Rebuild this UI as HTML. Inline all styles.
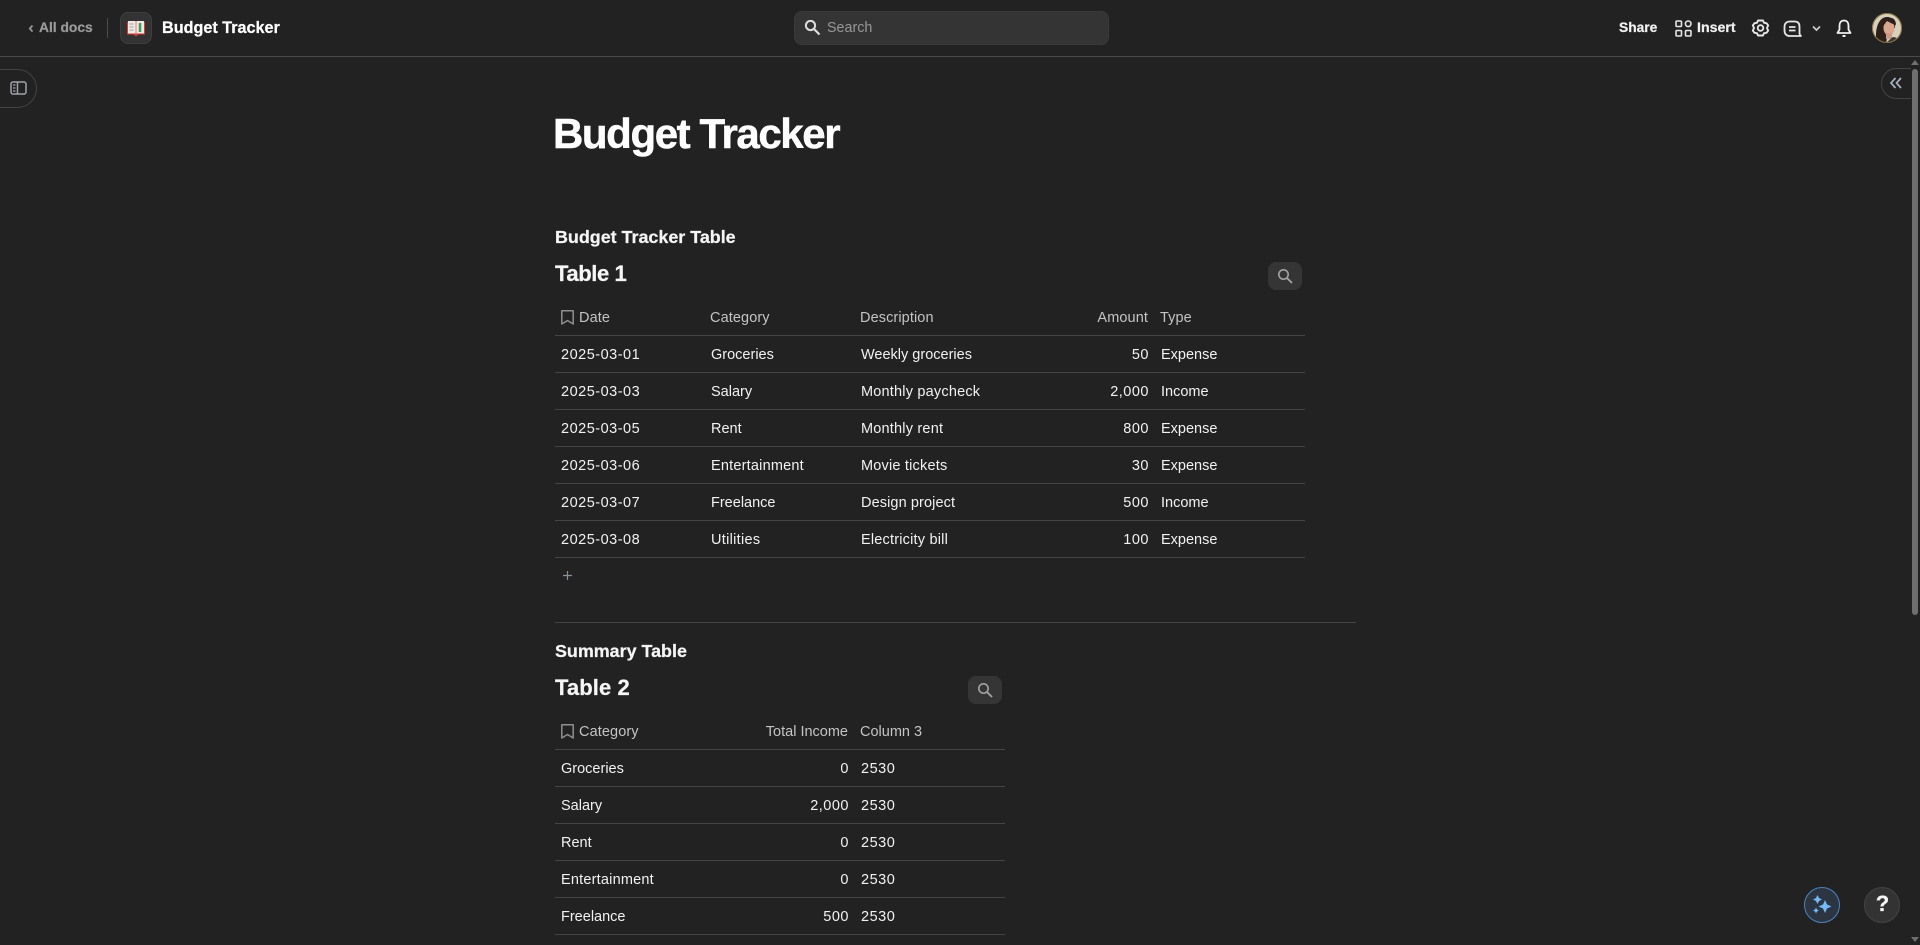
<!DOCTYPE html>
<html lang="en"><head><meta charset="utf-8"><title>Budget Tracker</title>
<style>
html,body{margin:0;padding:0;width:1920px;height:945px;overflow:hidden;background:#222;font-family:"Liberation Sans",sans-serif;color:#f2f2f2}
.t{position:absolute;white-space:nowrap;line-height:20px;font-size:14.5px}
.r{text-align:right}
.h{color:#c4c4c4;letter-spacing:.1px}
.n{letter-spacing:.5px}
.w{letter-spacing:.2px}
.b{font-weight:700;-webkit-text-stroke:.25px currentColor}
.l{position:absolute;height:1px;background:#444}
svg{position:absolute;overflow:visible}
.s{position:absolute;background:#353535;border-radius:8px}
</style></head><body>
<!-- header -->
<div class="l" style="left:0;top:56px;width:1920px;background:#4a4a4a"></div>
<svg style="left:28px;top:24px" width="6" height="9" viewBox="0 0 6 9" fill="none" stroke="#9a9a9a" stroke-width="1.700"><path d="M4.500 1.500 1.800 4.500 4.500 7.500"/></svg>
<div class="t b" style="left:39px;top:18px;color:#9a9a9a;font-size:13.800px">All docs</div>
<div style="position:absolute;left:107px;top:18px;width:1px;height:20px;background:#4d4d4d"></div>
<div style="position:absolute;left:120px;top:12px;width:30px;height:30px;border-radius:8px;background:#333;border:1px solid #3e3e3e"></div>
<svg style="left:127px;top:21px" width="18" height="15" viewBox="0 0 18 15"><rect x="0" y="1" width="18" height="12.500" fill="#d83a3a"/><rect x="1" y="0" width="7.700" height="12.500" fill="#efe9e4"/><rect x="9.300" y="0" width="7.700" height="12.500" fill="#efe9e4"/><path d="M2.500 3h4M2.500 6h4M2.500 9h4" stroke="#a5a09c" stroke-width="1"/><path d="M13 2v9" stroke="#3d9a5a" stroke-width="2.500"/><rect x="7.500" y="13" width="3" height="2" fill="#d83a3a"/></svg>
<div class="t b" style="left:162px;top:18px;font-size:16.200px;color:#fff">Budget Tracker</div>
<div style="position:absolute;left:794px;top:11px;width:313px;height:32px;background:#343434;border:1px solid #3b3b3b;border-radius:8px"></div>
<svg style="left:804px;top:19px" width="17" height="17" viewBox="0 0 17 17" fill="none" stroke="#ddd"><circle cx="6.500" cy="6.500" r="4.600" stroke-width="2"/><path d="M10 10l5.500 5.500" stroke-width="2.200"/></svg>
<div class="t" style="left:827px;top:18px;color:#989898;font-size:14.300px">Search</div>
<div class="t b" style="left:1619px;top:18px;font-size:13.800px;color:#f0f0f0">Share</div>
<svg style="left:1675px;top:20px" width="17" height="17" viewBox="0 0 17 17" fill="none" stroke="#e6e6e6" stroke-width="1.600"><rect x="1" y="1" width="5.500" height="5.500" rx="1"/><rect x="1" y="10.500" width="5.500" height="5.500" rx="1"/><rect x="10.500" y="10.500" width="5.500" height="5.500" rx="1"/><circle cx="13.200" cy="3.800" r="2.800"/></svg>
<div class="t b" style="left:1697px;top:18px;font-size:14.200px;color:#f0f0f0">Insert</div>
<svg style="left:1751px;top:19px" width="19" height="19" viewBox="0 0 19 19" fill="none" stroke="#e6e6e6" stroke-width="1.900"><path d="M7 1.500h5l1 2.300 2.500.4 1.700 2.200-1.200 2.600 1.200 2.600-1.700 2.200-2.500.4-1 2.300H7l-1-2.300-2.500-.4-1.700-2.200L3 9 1.800 6.400 3.500 4.200 6 3.800Z" stroke-linejoin="round"/><circle cx="9.500" cy="9" r="2.800"/></svg>
<svg style="left:1783px;top:20px" width="19" height="18" viewBox="0 0 19 18" fill="none" stroke="#e6e6e6" stroke-width="1.800"><path d="M7 1.500h4.500c3.300 0 5 1.800 5 5v6.500c0 1.300.5 2.300 1.500 3H7c-3.500 0-5.500-2-5.500-5.500v-3.500c0-3.500 2-5.500 5.500-5.500Z" stroke-linejoin="round"/><path d="M6 7h6.500M6 10.500h6.500"/></svg>
<svg style="left:1812px;top:25px" width="9" height="7" viewBox="0 0 9 7" fill="none" stroke="#ccc" stroke-width="1.700"><path d="M1 1.500 4.500 5 8 1.500"/></svg>
<svg style="left:1836px;top:19px" width="16" height="19" viewBox="0 0 16 19" fill="none" stroke="#f0f0f0" stroke-width="1.800"><path d="M8 1.500c3 0 4.500 2.200 4.500 5v4l2 3.500h-13l2-3.500v-4c0-2.800 1.500-5 4.500-5Z" stroke-linejoin="round"/><path d="M6.500 17h3" stroke-width="2"/></svg>
<svg style="left:1872px;top:13px" width="30" height="30" viewBox="0 0 30 30"><defs><clipPath id="av"><circle cx="15" cy="15" r="15"/></clipPath></defs><g clip-path="url(#av)"><rect width="30" height="30" fill="#d6d0bc"/><path d="M5 30C2 18 6 4 15 4c6 0 9 5 8 11l-6 2-3 13Z" fill="#2d1f1a"/><ellipse cx="17" cy="15" rx="5.500" ry="7.500" fill="#d9a78e"/><path d="M12 12c1-5 4-7 7-7 3 0 5 3 5 7-4-1-7-3-9-4-1 1-2 3-3 4Z" fill="#2d1f1a"/><rect x="14" y="20" width="6" height="6" fill="#c99a85"/><path d="M13 30c3-1 5-4 8-6 3 0 6 2 7 6Z" fill="#3a3634"/></g><circle cx="15" cy="15" r="14.500" fill="none" stroke="#8a7240" stroke-width="1"/></svg>

<!-- side pills -->
<div style="position:absolute;left:-30px;top:69px;width:65px;height:37px;border:1px solid #444;border-radius:20px"></div>
<svg style="left:10px;top:81px" width="17" height="14" viewBox="0 0 17 14" fill="none" stroke="#9fa4aa" stroke-width="1.500"><rect x="1" y="1" width="15" height="12" rx="2"/><path d="M7.500 1v12" stroke-width="1.500"/><path d="M3 4h2.500M3 7h2.500M3 10h2.500" stroke-width="1.200"/></svg>
<div style="position:absolute;left:1881px;top:68px;width:29px;height:29px;border:1px solid #444;border-radius:16px 0 0 16px;border-right:0"></div>
<svg style="left:1890px;top:77px" width="12" height="12" viewBox="0 0 12 12" fill="none" stroke="#a8b4c4" stroke-width="1.700"><path d="M5.500 1 1 6l4.500 5M11 1 6.500 6l4.500 5"/></svg>
<!-- scrollbar -->
<div style="position:absolute;left:1912px;top:69px;width:6px;height:546px;background:#6f6f6f;border-radius:3px"></div>
<div style="position:absolute;left:1911px;top:60px;width:0;height:0;border:4px solid transparent;border-top:0;border-bottom:5px solid #6f6f6f"></div>
<div style="position:absolute;left:1911px;top:937px;width:0;height:0;border:4px solid transparent;border-bottom:0;border-top:5px solid #6f6f6f"></div>

<!-- title -->
<div class="t b" style="left:553px;top:113px;line-height:42px;font-size:42px;color:#fff;letter-spacing:-1.400px;-webkit-text-stroke:.5px #fff">Budget Tracker</div>
<div class="t b" style="left:555px;top:227px;font-size:17.900px;color:#f5f5f5">Budget Tracker Table</div>
<div class="t b" style="left:555px;top:264px;font-size:22px;color:#f5f5f5;letter-spacing:-.4px">Table 1</div>
<div class="s" style="left:1268px;top:262px;width:34px;height:28px"></div>
<svg style="left:1277px;top:268px" width="16" height="16" viewBox="0 0 16 16" fill="none" stroke="#a2a2a2" stroke-width="1.600"><circle cx="6.500" cy="6.500" r="4.700"/><path d="M10 10l5 5" stroke-width="1.900"/></svg>

<!-- table 1 header -->
<svg style="left:561px;top:310px" width="13" height="15" viewBox="0 0 13 15" fill="none" stroke="#8f8f8f" stroke-width="1.500"><path d="M.8 14V.8h11.400V14L6.500 10.500Z" stroke-linejoin="round"/></svg>
<div class="t h" style="left:579px;top:308px">Date</div>
<div class="t h" style="left:710px;top:308px">Category</div>
<div class="t h" style="left:860px;top:308px">Description</div>
<div class="t h r" style="right:772px;top:308px">Amount</div>
<div class="t h" style="left:1160px;top:308px">Type</div>
<div class="l" style="left:555px;top:335px;width:750px"></div>
<!-- rows -->
<div class="t n" style="left:561px;top:345px">2025-03-01</div><div class="t" style="left:711px;top:345px">Groceries</div><div class="t" style="left:861px;top:345px">Weekly groceries</div><div class="t r n" style="right:771px;top:345px">50</div><div class="t" style="left:1161px;top:345px">Expense</div>
<div class="l" style="left:555px;top:372px;width:750px"></div>
<div class="t n" style="left:561px;top:382px">2025-03-03</div><div class="t" style="left:711px;top:382px">Salary</div><div class="t w" style="left:861px;top:382px">Monthly paycheck</div><div class="t r n" style="right:771px;top:382px">2,000</div><div class="t" style="left:1161px;top:382px">Income</div>
<div class="l" style="left:555px;top:409px;width:750px"></div>
<div class="t n" style="left:561px;top:419px">2025-03-05</div><div class="t" style="left:711px;top:419px">Rent</div><div class="t w" style="left:861px;top:419px">Monthly rent</div><div class="t r n" style="right:771px;top:419px">800</div><div class="t" style="left:1161px;top:419px">Expense</div>
<div class="l" style="left:555px;top:446px;width:750px"></div>
<div class="t n" style="left:561px;top:456px">2025-03-06</div><div class="t w" style="left:711px;top:456px">Entertainment</div><div class="t w" style="left:861px;top:456px">Movie tickets</div><div class="t r n" style="right:771px;top:456px">30</div><div class="t" style="left:1161px;top:456px">Expense</div>
<div class="l" style="left:555px;top:483px;width:750px"></div>
<div class="t n" style="left:561px;top:493px">2025-03-07</div><div class="t" style="left:711px;top:493px">Freelance</div><div class="t" style="left:861px;top:493px;letter-spacing:.1px">Design project</div><div class="t r n" style="right:771px;top:493px">500</div><div class="t" style="left:1161px;top:493px">Income</div>
<div class="l" style="left:555px;top:520px;width:750px"></div>
<div class="t n" style="left:561px;top:530px">2025-03-08</div><div class="t" style="left:711px;top:530px;letter-spacing:.3px">Utilities</div><div class="t w" style="left:861px;top:530px">Electricity bill</div><div class="t r n" style="right:771px;top:530px">100</div><div class="t" style="left:1161px;top:530px">Expense</div>
<div class="l" style="left:555px;top:557px;width:750px"></div>
<svg style="left:562.500px;top:570.500px" width="9" height="9" viewBox="0 0 9 9" stroke="#8a9098" stroke-width="1.200"><path d="M4.500 0v9M0 4.500h9"/></svg>
<div class="l" style="left:555px;top:622px;width:801px"></div>

<!-- table 2 -->
<div class="t b" style="left:555px;top:641px;font-size:17.900px;color:#f5f5f5">Summary Table</div>
<div class="t b" style="left:555px;top:678px;font-size:22px;color:#f5f5f5;letter-spacing:.1px">Table 2</div>
<div class="s" style="left:968px;top:676px;width:34px;height:28px"></div>
<svg style="left:977px;top:682px" width="16" height="16" viewBox="0 0 16 16" fill="none" stroke="#a2a2a2" stroke-width="1.600"><circle cx="6.500" cy="6.500" r="4.700"/><path d="M10 10l5 5" stroke-width="1.900"/></svg>
<svg style="left:561px;top:724px" width="13" height="15" viewBox="0 0 13 15" fill="none" stroke="#8f8f8f" stroke-width="1.500"><path d="M.8 14V.8h11.400V14L6.500 10.500Z" stroke-linejoin="round"/></svg>
<div class="t h" style="left:579px;top:722px">Category</div>
<div class="t h r" style="right:1072px;top:722px;letter-spacing:0">Total Income</div>
<div class="t h" style="left:860px;top:722px;letter-spacing:0">Column 3</div>
<div class="l" style="left:555px;top:749px;width:450px"></div>
<div class="t" style="left:561px;top:759px">Groceries</div><div class="t r n" style="right:1071px;top:759px">0</div><div class="t n" style="left:861px;top:759px">2530</div>
<div class="l" style="left:555px;top:786px;width:450px"></div>
<div class="t" style="left:561px;top:796px">Salary</div><div class="t r n" style="right:1071px;top:796px">2,000</div><div class="t n" style="left:861px;top:796px">2530</div>
<div class="l" style="left:555px;top:823px;width:450px"></div>
<div class="t" style="left:561px;top:833px">Rent</div><div class="t r n" style="right:1071px;top:833px">0</div><div class="t n" style="left:861px;top:833px">2530</div>
<div class="l" style="left:555px;top:860px;width:450px"></div>
<div class="t w" style="left:561px;top:870px">Entertainment</div><div class="t r n" style="right:1071px;top:870px">0</div><div class="t n" style="left:861px;top:870px">2530</div>
<div class="l" style="left:555px;top:897px;width:450px"></div>
<div class="t" style="left:561px;top:907px">Freelance</div><div class="t r n" style="right:1071px;top:907px">500</div><div class="t n" style="left:861px;top:907px">2530</div>
<div class="l" style="left:555px;top:934px;width:450px"></div>

<!-- floating -->
<div style="position:absolute;left:1804px;top:887px;width:34px;height:34px;border-radius:50%;background:#2b3642;border:1.500px solid #4d82bd"></div>
<svg style="left:1812px;top:895px" width="20" height="20" viewBox="0 0 20 20" fill="#74baf8"><path d="M13 5 15 9.500 19.500 11.500 15 13.500 13 18 11 13.500 6.500 11.500 11 9.500Z"/><path d="M5.500 0 7 3 10 4.500 7 6 5.500 9 4 6 1 4.500 4 3Z"/><path d="M4 12.500 5 14.500 7 15.500 5 16.500 4 18.500 3 16.500 1 15.500 3 14.500Z"/></svg>
<div style="position:absolute;left:1864px;top:887px;width:34px;height:34px;border-radius:50%;background:#333;border:1.500px solid #444"></div>
<div class="t b" style="left:1864px;top:894px;width:37px;text-align:center;font-size:22px;color:#f5f5f5">?</div>
</body></html>
